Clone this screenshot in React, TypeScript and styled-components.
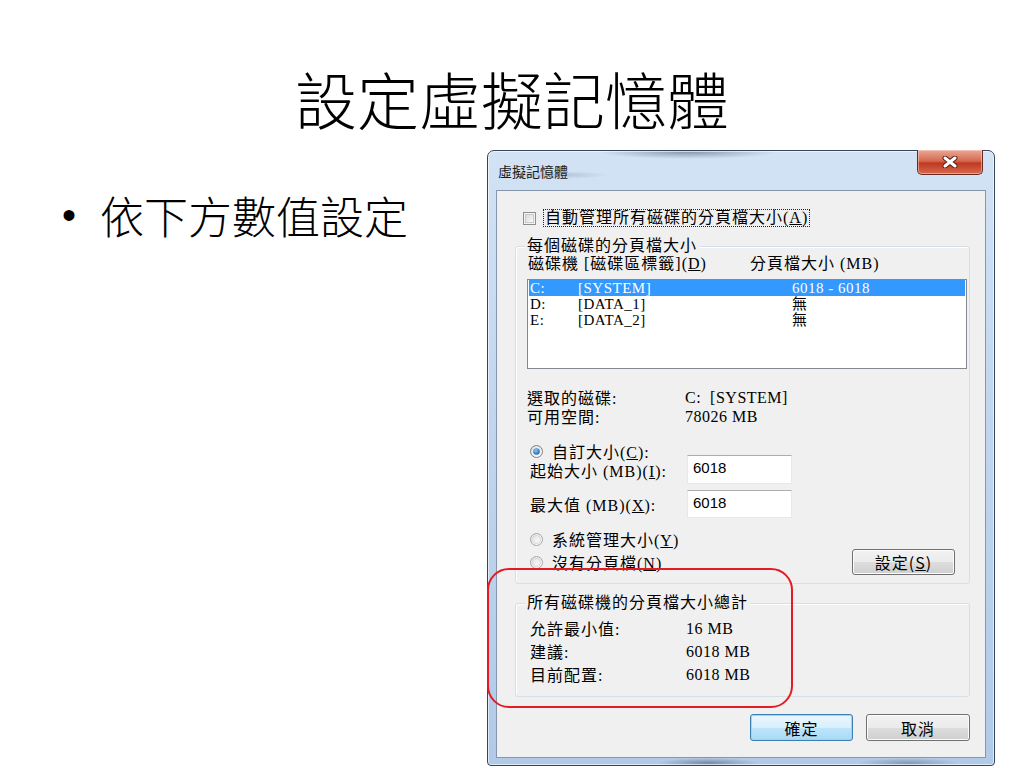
import styled, { createGlobalStyle } from "styled-components";

const GlobalStyle = createGlobalStyle`
  html, body { margin: 0; padding: 0; background: #fff; }
  body { font-family: "Noto Sans CJK TC", sans-serif; color: #000; }
`;

const dlgFont = `"Liberation Serif", "Noto Sans CJK TC", serif`;

const Slide = styled.div`
  width: 1024px;
  height: 768px;
  overflow: hidden;
  background: #fff;
  display: flex;
  flex-direction: column;
`;

const Title = styled.h1`
  margin: 0;
  height: 150px;
  box-sizing: border-box;
  padding-top: 46px;
  display: flex;
  justify-content: center;
  align-items: center;
  font-family: "Noto Sans CJK TC", sans-serif;
  font-weight: 300;
  font-size: 62px;
  line-height: 1;
`;

const Body = styled.div`
  display: flex;
  flex: 1;
  min-height: 0;
`;

const Bullets = styled.ul`
  list-style: none;
  margin: 0;
  width: 487px;
  flex-shrink: 0;
  box-sizing: border-box;
  padding: 39px 0 0 62px;
`;

const BulletItem = styled.li`
  display: flex;
  font-size: 44px;
  line-height: 53px;
  font-weight: 300;
`;

const Dot = styled.span`
  width: 38px;
  font-family: "Liberation Sans", sans-serif;
  font-size: 40px;
`;

const Window = styled.div`
  position: relative;
  width: 508px;
  height: 616px;
  flex-shrink: 0;
  box-sizing: border-box;
  display: flex;
  flex-direction: column;
  padding: 0 8px 7px 8px;
  border: 1px solid #34465e;
  border-radius: 7px 7px 4px 4px;
  background:
    radial-gradient(ellipse 90px 7px at 200px 1px, rgba(50, 60, 80, 0.45), transparent),
    radial-gradient(ellipse 50px 4px at 70px 24px, rgba(80, 95, 120, 0.25), transparent),
    radial-gradient(ellipse 50px 5px at 220px 612px, rgba(50, 60, 80, 0.45), transparent),
    radial-gradient(ellipse 50px 5px at 420px 612px, rgba(50, 60, 80, 0.35), transparent),
    linear-gradient(to bottom, #d3e3f5 0%, #c4d8ef 35%, #b1cae8 100%);
  box-shadow: inset 0 0 0 1px rgba(255, 255, 255, 0.6);
`;

const TitleBar = styled.div`
  height: 39px;
  display: flex;
  justify-content: space-between;
  align-items: center;
  padding-left: 2px;
  font-family: "Noto Sans CJK TC", sans-serif;
  font-size: 14px;
  color: #1a1a1a;
`;

const CloseButton = styled.div`
  align-self: flex-start;
  width: 66px;
  height: 25px;
  margin-top: -1px;
  margin-right: 3px;
  box-sizing: border-box;
  display: flex;
  align-items: center;
  justify-content: center;
  border: 1px solid #6b2a1f;
  border-top: none;
  border-radius: 0 0 5px 5px;
  background: linear-gradient(to bottom, #e9a996 0%, #d66a52 45%, #c0391f 55%, #d5694f 100%);
  box-shadow: inset 0 0 0 1px rgba(255, 220, 210, 0.5);
`;

const Client = styled.div`
  flex: 1;
  box-sizing: border-box;
  display: flex;
  flex-direction: column;
  padding: 18px 15px 0 18px;
  background: #f0f0f0;
  border: 1px solid #8796ab;
  font-family: ${dlgFont};
  font-size: 16px;
  letter-spacing: 1px;
`;

const CheckRow = styled.div`
  display: flex;
  align-items: center;
  height: 18px;
  padding-left: 8px;
`;

const FocusLabel = styled.span`
  margin-left: 7px;
  padding: 0 1px;
  line-height: 16px;
  border: 1px dotted #222;
`;

const Group = styled.div<{ $top: number; $pad: string }>`
  position: relative;
  margin-top: ${(p) => p.$top}px;
  border: 1px solid #d5dfe5;
  border-radius: 3px;
  padding: ${(p) => p.$pad};
  box-shadow: inset 1px 1px 0 #fff;
`;

const Legend = styled.span`
  position: absolute;
  top: -11px;
  left: 9px;
  padding: 0 2px;
  line-height: 20px;
  background: #f0f0f0;
`;

const HeaderRow = styled.div`
  display: grid;
  grid-template-columns: 222px 1fr;
  height: 18px;
  line-height: 18px;
  padding-left: 1px;
`;

const ListBox = styled.div`
  margin-top: 6px;
  height: 90px;
  box-sizing: border-box;
  border: 1px solid #828790;
  background: #fff;
  padding: 0 1px;
`;

const ListRow = styled.div<{ $selected?: boolean }>`
  display: grid;
  grid-template-columns: 48px 214px 1fr;
  height: 16px;
  line-height: 16px;
  padding-left: 1px;
  font-size: 15px;
  letter-spacing: 0.5px;
  background: ${(p) => (p.$selected ? "#3399ff" : "transparent")};
  color: ${(p) => (p.$selected ? "#fff" : "#000")};
`;

const InfoGrid = styled.div<{ $col: number; $row: number; $top: number; $indent: number }>`
  display: grid;
  grid-template-columns: ${(p) => p.$col}px 1fr;
  grid-auto-rows: ${(p) => p.$row}px;
  align-items: center;
  margin-top: ${(p) => p.$top}px;
  padding-left: ${(p) => p.$indent}px;
`;

const Value = styled.span`
  font-size: 16px;
  letter-spacing: 0.5px;
  padding-top: 3px;
`;

const RadioRow = styled.div<{ $top: number }>`
  display: flex;
  align-items: center;
  height: 18px;
  margin-top: ${(p) => p.$top}px;
  padding-left: 3px;
  gap: 9px;
`;

const FieldRow = styled.div<{ $top: number; $h: number }>`
  display: flex;
  align-items: center;
  height: ${(p) => p.$h}px;
  margin-top: ${(p) => p.$top}px;
  padding-left: 3px;
`;

const FieldLabel = styled.span`
  width: 157px;
`;

const TextBox = styled.div`
  width: 105px;
  height: 100%;
  box-sizing: border-box;
  padding: 3px 5px;
  background: #fff;
  border: 1px solid #e3e9ef;
  border-top-color: #abadb3;
  font-family: "Liberation Sans", sans-serif;
  font-size: 15px;
  letter-spacing: 0;
  line-height: 18px;
`;

const LastRow = styled.div`
  display: flex;
  align-items: center;
  justify-content: space-between;
  height: 26px;
  margin-top: 1px;
  padding-left: 3px;
`;

const RadioLabel = styled.span`
  display: flex;
  align-items: center;
  gap: 9px;
`;

const Button = styled.div<{ $default?: boolean; $w: number; $h: number }>`
  width: ${(p) => p.$w}px;
  height: ${(p) => p.$h}px;
  box-sizing: border-box;
  display: flex;
  align-items: center;
  justify-content: center;
  border-radius: 3px;
  border: 1px solid ${(p) => (p.$default ? "#3c7fb1" : "#707070")};
  background: ${(p) =>
    p.$default
      ? "linear-gradient(to bottom, #eaf6fd 0%, #d9f0fc 50%, #bee6fd 51%, #a7d9f5 100%)"
      : "linear-gradient(to bottom, #f2f2f2 0%, #ebebeb 50%, #dddddd 51%, #cfcfcf 100%)"};
  box-shadow: inset 0 0 0 1px ${(p) => (p.$default ? "#9bd7f5" : "#fcfcfc")};
  font-family: "Noto Sans CJK TC", sans-serif;
  font-size: 16px;
  letter-spacing: 1px;
`;

const ButtonRow = styled.div`
  display: flex;
  justify-content: flex-end;
  gap: 13px;
  margin-top: 17px;
`;

const Highlight = styled.div`
  position: absolute;
  left: -1px;
  top: 417px;
  width: 306px;
  height: 140px;
  box-sizing: border-box;
  border: 2.5px solid #e31b23;
  border-radius: 22px;
  pointer-events: none;
`;

function Radio({ checked }: { checked?: boolean }) {
  return (
    <svg width="13" height="13" viewBox="0 0 13 13">
      <defs>
        <linearGradient id={checked ? "rgOn" : "rgOff"} x1="0" y1="0" x2="1" y2="1">
          <stop offset="0" stopColor={checked ? "#dcdcdc" : "#e2e2e2"} />
          <stop offset="1" stopColor="#ffffff" />
        </linearGradient>
        <radialGradient id="rgDot" cx="0.4" cy="0.35" r="0.7">
          <stop offset="0" stopColor="#8cc8f6" />
          <stop offset="1" stopColor="#1a5fb4" />
        </radialGradient>
      </defs>
      <circle
        cx="6.5"
        cy="6.5"
        r="6"
        fill={`url(#${checked ? "rgOn" : "rgOff"})`}
        stroke={checked ? "#7e7e7e" : "#a6a6a6"}
      />
      {!checked && <circle cx="6.5" cy="6.5" r="4" fill="none" stroke="#d6d6d6" />}
      {checked && <circle cx="6.5" cy="6.5" r="3.3" fill="url(#rgDot)" />}
    </svg>
  );
}

function CheckBox() {
  return (
    <svg width="13" height="13" viewBox="0 0 13 13">
      <defs>
        <linearGradient id="cbFill" x1="0" y1="0" x2="1" y2="1">
          <stop offset="0" stopColor="#d8d8d8" />
          <stop offset="1" stopColor="#fbfbfb" />
        </linearGradient>
      </defs>
      <rect x="0.5" y="0.5" width="12" height="12" fill="#f4f4f4" stroke="#8f8f8f" />
      <rect x="2.5" y="2.5" width="8" height="8" fill="url(#cbFill)" stroke="#c9c9c9" />
    </svg>
  );
}

function CloseX() {
  return (
    <svg width="16" height="12" viewBox="0 0 16 12">
      <path d="M3 2 L13 10 M13 2 L3 10" stroke="#5a1e14" strokeWidth="5" strokeLinecap="round" />
      <path d="M3 2 L13 10 M13 2 L3 10" stroke="#fff" strokeWidth="3" strokeLinecap="round" />
    </svg>
  );
}

export default function App() {
  return (
    <>
      <GlobalStyle />
      <Slide>
        <Title>設定虛擬記憶體</Title>
        <Body>
          <Bullets>
            <BulletItem>
              <Dot>•</Dot>
              依下方數值設定
            </BulletItem>
          </Bullets>

          <Window>
            <TitleBar>
              <span>虛擬記憶體</span>
              <CloseButton>
                <CloseX />
              </CloseButton>
            </TitleBar>

            <Client>
              <CheckRow>
                <CheckBox />
                <FocusLabel>
                  自動管理所有磁碟的分頁檔大小(<u>A</u>)
                </FocusLabel>
              </CheckRow>

              <Group $top={19} $pad="8px 2px 8px 11px">
                <Legend>每個磁碟的分頁檔大小</Legend>
                <HeaderRow>
                  <span>
                    磁碟機 [磁碟區標籤](<u>D</u>)
                  </span>
                  <span>分頁檔大小 (MB)</span>
                </HeaderRow>
                <ListBox>
                  <ListRow $selected>
                    <span>C:</span>
                    <span>[SYSTEM]</span>
                    <span>6018 - 6018</span>
                  </ListRow>
                  <ListRow>
                    <span>D:</span>
                    <span>[DATA_1]</span>
                    <span>無</span>
                  </ListRow>
                  <ListRow>
                    <span>E:</span>
                    <span>[DATA_2]</span>
                    <span>無</span>
                  </ListRow>
                </ListBox>

                <InfoGrid $col={158} $row={19} $top={18} $indent={0}>
                  <span>選取的磁碟:</span>
                  <Value>C:&nbsp; [SYSTEM]</Value>
                  <span>可用空間:</span>
                  <Value>78026 MB</Value>
                </InfoGrid>

                <RadioRow $top={17}>
                  <Radio checked />
                  <span>
                    自訂大小(<u>C</u>):
                  </span>
                </RadioRow>
                <FieldRow $top={-5} $h={29}>
                  <FieldLabel>
                    起始大小 (MB)(<u>I</u>):
                  </FieldLabel>
                  <TextBox>6018</TextBox>
                </FieldRow>
                <FieldRow $top={6} $h={28}>
                  <FieldLabel>
                    最大值 (MB)(<u>X</u>):
                  </FieldLabel>
                  <TextBox>6018</TextBox>
                </FieldRow>
                <RadioRow $top={12}>
                  <Radio />
                  <span>
                    系統管理大小(<u>Y</u>)
                  </span>
                </RadioRow>
                <LastRow>
                  <RadioLabel>
                    <Radio />
                    <span>
                      沒有分頁檔(<u>N</u>)
                    </span>
                  </RadioLabel>
                  <Button $w={103} $h={26} style={{ marginRight: 12 }}>
                    設定(<u>S</u>)
                  </Button>
                </LastRow>
              </Group>

              <Group $top={19} $pad="12px 2px 11px 11px">
                <Legend>所有磁碟機的分頁檔大小總計</Legend>
                <InfoGrid $col={156} $row={23} $top={0} $indent={3}>
                  <span>允許最小值:</span>
                  <Value>16 MB</Value>
                  <span>建議:</span>
                  <Value>6018 MB</Value>
                  <span>目前配置:</span>
                  <Value>6018 MB</Value>
                </InfoGrid>
              </Group>

              <ButtonRow>
                <Button $default $w={103} $h={27}>
                  確定
                </Button>
                <Button $w={104} $h={27}>
                  取消
                </Button>
              </ButtonRow>
            </Client>

            <Highlight />
          </Window>
        </Body>
      </Slide>
    </>
  );
}
